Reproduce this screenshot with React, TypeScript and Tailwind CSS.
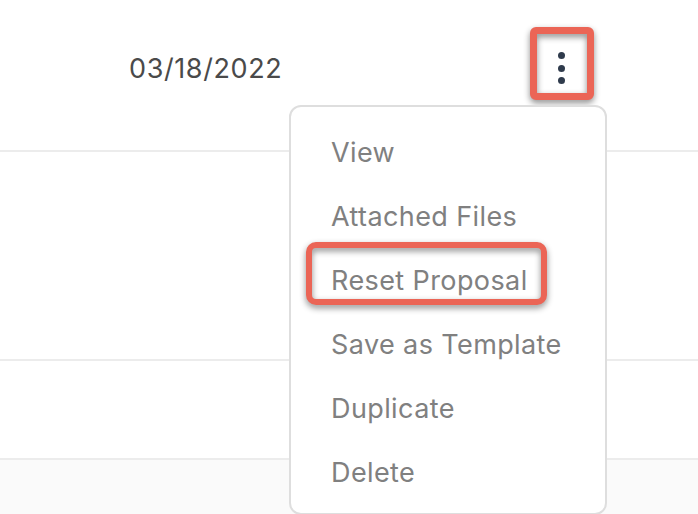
export default function App() {
  const items = ["View", "Attached Files", "Reset Proposal", "Save as Template", "Duplicate", "Delete"];
  return (
    <div className="relative w-[698px] h-[514px] overflow-hidden bg-white flex flex-col font-[Inter,sans-serif]">
      <div className="h-[152px] shrink-0 border-b-2 border-[#ececec] flex items-start">
        <div className="pl-[129px] pt-[53px] w-[558px] shrink-0 text-[27px] tracking-[0.6px] leading-[32px] text-[#4a4a4a]">03/18/2022</div>
        <div className="pt-[52px] flex flex-col gap-[5.5px]">
          <span className="block w-[7px] h-[7px] rounded-full bg-[#2f3b4c]" />
          <span className="block w-[7px] h-[7px] rounded-full bg-[#2f3b4c]" />
          <span className="block w-[7px] h-[7px] rounded-full bg-[#2f3b4c]" />
        </div>
      </div>
      <div className="h-[209px] shrink-0 border-b-2 border-[#ececec]" />
      <div className="h-[99px] shrink-0 border-b-2 border-[#ececec]" />
      <div className="flex-1 bg-[#fafafa]" />

      <div className="absolute left-[530px] top-[27px] w-[64px] h-[73px] border-[7px] border-[#eb6556] rounded-[6px] drop-shadow-[0_3px_3px_rgba(0,0,0,0.45)]" />

      <div className="absolute left-[289px] top-[105px] w-[318px] h-[410px] border-2 border-[#dedede] rounded-[12px] bg-white pt-[14px]">
        {items.map((t) => (
          <div key={t} className="h-[64px] flex items-center pl-[40px] text-[27px] tracking-[0.4px] text-[#808080]">
            {t}
          </div>
        ))}
        <div className="absolute left-[15px] top-[135px] w-[241px] h-[63px] border-[6px] border-[#eb6556] rounded-[10px] drop-shadow-[0_3px_3px_rgba(0,0,0,0.45)]" />
      </div>
    </div>
  );
}
